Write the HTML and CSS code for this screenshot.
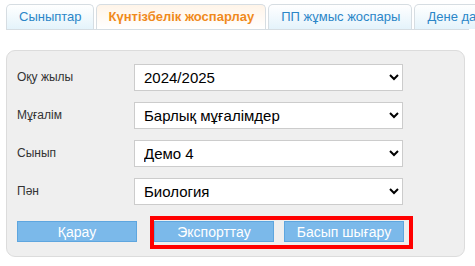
FILE: index.html
```html
<!DOCTYPE html>
<html lang="kk">
<head>
    <meta charset="UTF-8">
    <meta name="viewport" content="width=device-width, initial-scale=1.0">
    <title>Күнтізбелік жоспарлау</title>
    <link rel="stylesheet" href="styles.css">
</head>
<body>

    <!-- Tabs -->
    <div class="tabs">
        <div class="tab">Сыныптар</div>
        <div class="tab active">Күнтізбелік жоспарлау</div>
        <div class="tab">ПП жұмыс жоспары</div>
        <div class="tab">Дене дайындығы</div>
    </div>

    <!-- Filter panel -->
    <div class="panel">
        <div class="row">
            <label class="label">Оқу жылы</label>
            <select class="field">
                <option>2024/2025</option>
            </select>
        </div>
        <div class="row">
            <label class="label">Мұғалім</label>
            <select class="field">
                <option>Барлық мұғалімдер</option>
            </select>
        </div>
        <div class="row">
            <label class="label">Сынып</label>
            <select class="field">
                <option>Демо 4</option>
            </select>
        </div>
        <div class="row">
            <label class="label">Пән</label>
            <select class="field">
                <option>Биология</option>
            </select>
        </div>

        <div class="actions">
            <button class="btn btn-view">Қарау</button>
            <div class="highlight">
                <button class="btn">Экспорттау</button>
                <button class="btn">Басып шығару</button>
            </div>
        </div>
    </div>

</body>
</html>
```

FILE: styles.css
```css
body {
    font-family: "Liberation Sans", Arial, sans-serif;
    margin: 0;
    padding: 4px 6px 0 6px;
    background: white;
    overflow: hidden;
}

/* Tabs */
.tabs {
    display: flex;
    gap: 2px;
    border-bottom: 1px solid #d6dde2;
    white-space: nowrap;
}
.tab {
    flex-shrink: 0;
    height: 24px;
    line-height: 24px;
    padding: 0 11px 0 12px;
    font-size: 13px;
    color: #2b86c8;
    background: linear-gradient(to bottom, #ffffff, #e4f3fb);
    border: 1px solid #d6dde2;
    border-bottom: none;
    border-radius: 5px 5px 0 0;
}
.tab.active {
    color: #f08a1c;
    font-weight: bold;
    background: linear-gradient(to bottom, #fff4e8, #ffffff);
}

/* Panel */
.panel {
    margin-top: 20px;
    width: 437px;
    background: #efefef;
    border: 1px solid #dcdcdc;
    border-radius: 9px;
    padding: 13px 10px 7px 10px;
    display: flex;
    flex-direction: column;
    gap: 11px;
}
.row {
    display: flex;
    align-items: center;
}
.label {
    width: 117px;
    font-size: 12px;
    color: #333;
    margin-top: -2px;
}
.field {
    width: 269px;
    height: 27px;
    font-family: "Liberation Sans", Arial, sans-serif;
    font-size: 15px;
    color: black;
    background: white;
    border: 1px solid #cccccc;
    padding: 0 5px;
}

/* Buttons */
.actions {
    display: flex;
    align-items: flex-start;
}
.btn {
    width: 120px;
    height: 21px;
    background: #7bb9ea;
    color: white;
    border: 1px solid #5ea6df;
    font-family: "Liberation Sans", Arial, sans-serif;
    font-size: 14px;
    padding: 0;
    cursor: pointer;
}
.btn-view {
    margin-top: 5px;
    margin-right: 13px;
}
.highlight {
    display: flex;
    gap: 10px;
    border: 4px solid #ff0000;
    padding: 1px 5px 3px 0;
}
```
